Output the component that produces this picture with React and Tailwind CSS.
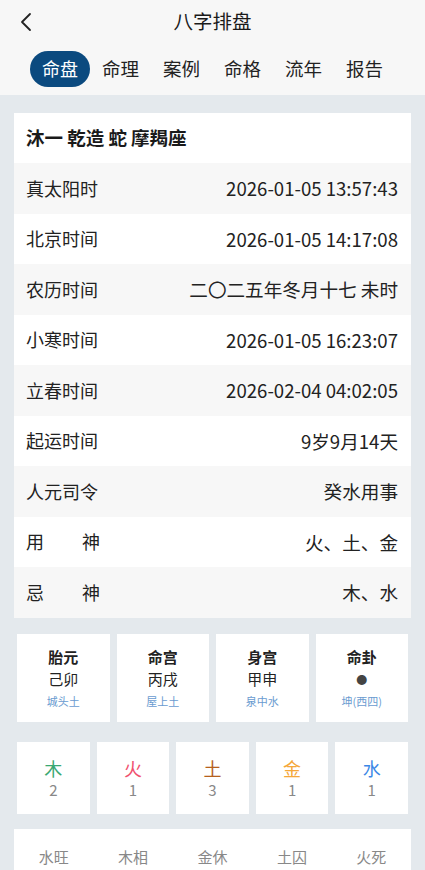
import React from "react";

const rows = [
  ["真太阳时", "2026-01-05 13:57:43"],
  ["北京时间", "2026-01-05 14:17:08"],
  ["农历时间", "二〇二五年冬月十七 未时"],
  ["小寒时间", "2026-01-05 16:23:07"],
  ["立春时间", "2026-02-04 04:02:05"],
  ["起运时间", "9岁9月14天"],
  ["人元司令", "癸水用事"],
  ["用神", "火、土、金", true],
  ["忌神", "木、水", true],
];

const palaces = [
  { t: "胎元", v: "己卯", s: "城头土" },
  { t: "命宫", v: "丙戌", s: "屋上土" },
  { t: "身宫", v: "甲申", s: "泉中水" },
  { t: "命卦", v: "●", s: "坤(西四)" },
];

const elements = [
  { n: "木", c: "text-[#3aa873]", v: 2 },
  { n: "火", c: "text-[#f0506e]", v: 1 },
  { n: "土", c: "text-[#b5611d]", v: 3 },
  { n: "金", c: "text-[#f5a73a]", v: 1 },
  { n: "水", c: "text-[#3b87e6]", v: 1 },
];

const tabs = ["命盘", "命理", "案例", "命格", "流年", "报告"];

export default function App() {
  return (
    <div className="w-[425px] h-[870px] overflow-hidden bg-[#e4e9ed] text-[#222] font-['Noto_Sans_CJK_SC','Noto_Sans',sans-serif]">
      <div className="bg-[#f7f7f7]">
        <div className="relative h-[42px] flex items-center justify-center">
          <svg className="absolute left-[18px] top-[12px]" width="16" height="20" viewBox="0 0 16 20" fill="none">
            <path d="M12 2 L4 10 L12 18" stroke="#222" strokeWidth="1.8" strokeLinecap="round" strokeLinejoin="round" />
          </svg>
          <span className="text-[19.5px] text-[#1a1a1a]">八字排盘</span>
        </div>
        <div className="h-[53px] flex items-center pl-[30px]">
          {tabs.map((t, i) => (
            <div
              key={t}
              className={
                i === 0
                  ? "h-[36px] px-[12px] rounded-full bg-[#0b4a7f] text-white text-[18px] flex items-center"
                  : "h-[36px] px-[12px] text-[18.5px] text-[#222] flex items-center"
              }
            >
              {t}
            </div>
          ))}
        </div>
      </div>

      <div className="px-[14px] pt-[18px]">
        <div className="bg-white">
          <div className="h-[50px] flex items-center px-[12px] text-[18.5px] font-bold text-[#1a1a1a]">沐一 乾造 蛇 摩羯座</div>
          {rows.map(([k, v, spread], i) => (
            <div
              key={k}
              className={`h-[50.5px] flex items-center justify-between pl-[12px] pr-[13px] text-[18px] ${i % 2 === 0 ? "bg-[#f7f7f7]" : "bg-white"}`}
            >
              {spread ? (
                <span className="w-[74px] flex justify-between">
                  <span>{k[0]}</span>
                  <span>{k[1]}</span>
                </span>
              ) : (
                <span>{k}</span>
              )}
              <span className="text-[18.6px]">{v}</span>
            </div>
          ))}
        </div>

        <div className="mx-[3px] mt-[16px] grid grid-cols-4 gap-[7px]">
          {palaces.map((p) => (
            <div key={p.t} className="h-[88px] bg-white flex flex-col items-center pt-[12px]">
              <div className="text-[15px] font-bold text-[#222] leading-[22px]">{p.t}</div>
              <div className={`leading-[22px] ${p.v === "●" ? "text-[#444] text-[11px]" : "text-[15px] text-[#222]"}`}>{p.v}</div>
              <div className="text-[11px] text-[#6a9bd0] leading-[22px]">{p.s}</div>
            </div>
          ))}
        </div>

        <div className="mx-[3px] mt-[20px] grid grid-cols-5 gap-[7px]">
          {elements.map((e) => (
            <div key={e.n} className="h-[72px] bg-white flex flex-col items-center pt-[15px]">
              <div className={`text-[18px] leading-[22px] ${e.c}`}>{e.n}</div>
              <div className="text-[15px] text-[#888] leading-[22px]">{e.v}</div>
            </div>
          ))}
        </div>

        <div className="mt-[15px] bg-white h-[60px] grid grid-cols-5 pt-[16px] text-[15px] text-[#888]">
          {["水旺", "木相", "金休", "土囚", "火死"].map((t) => (
            <div key={t} className="text-center leading-[24px]">{t}</div>
          ))}
        </div>
      </div>
    </div>
  );
}
